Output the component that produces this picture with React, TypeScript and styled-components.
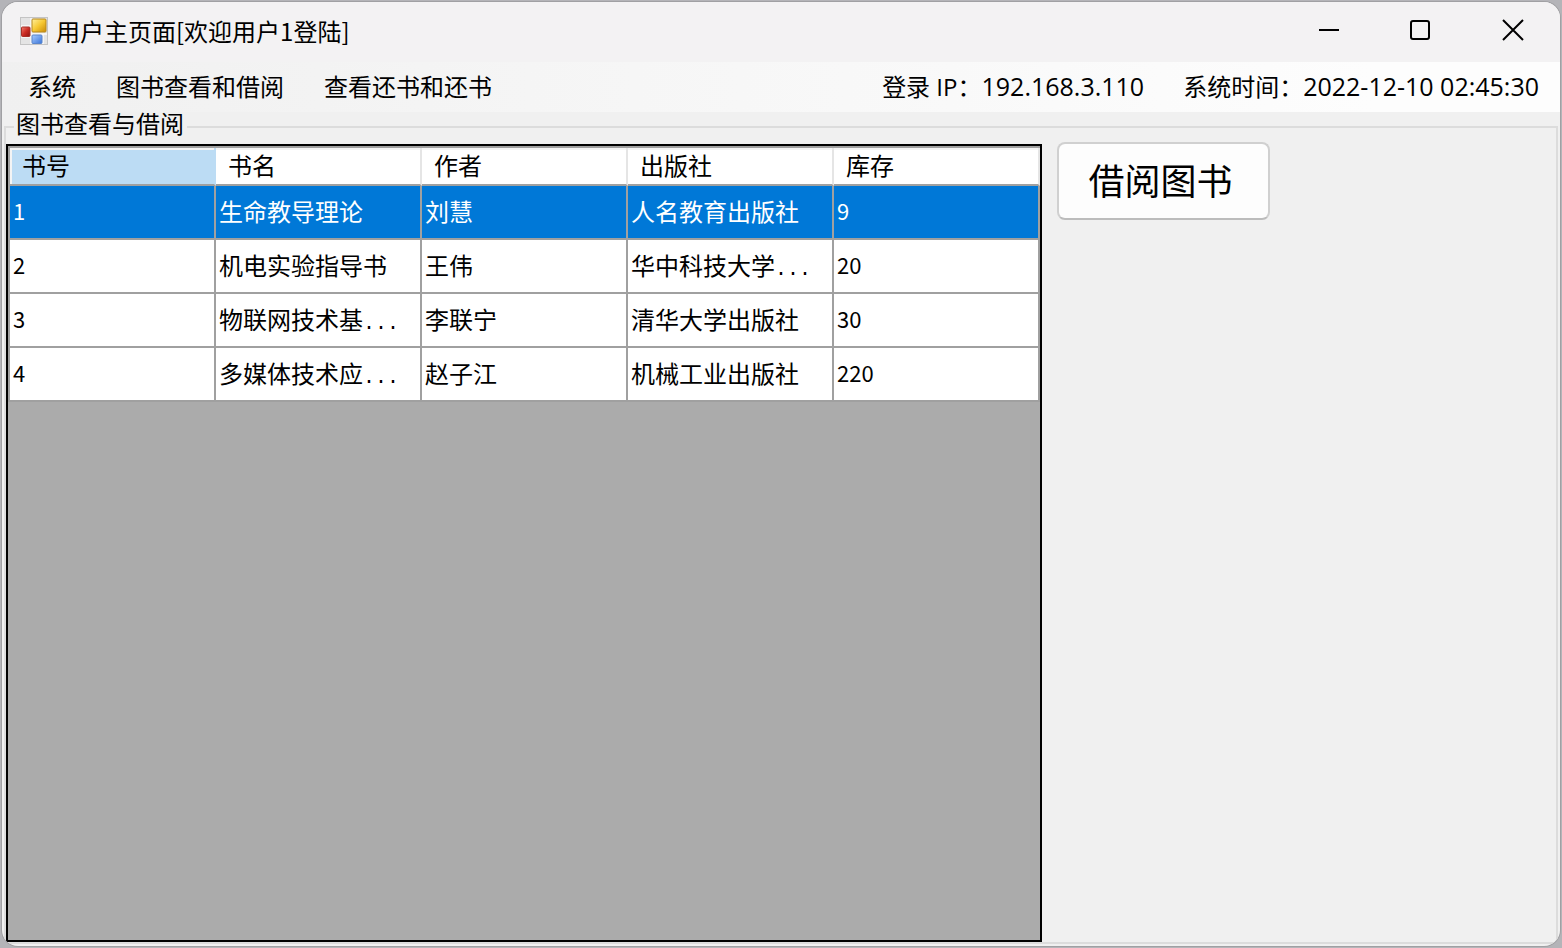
import React, { useState } from "react";
import styled, { createGlobalStyle } from "styled-components";

const GlobalStyle = createGlobalStyle`
  *, *::before, *::after { box-sizing: border-box; }
  body {
    margin: 0;
    background: #b4b4b8;
    color: #000;
    font: 24px/32px "Noto Sans CJK SC", sans-serif;
  }
  button { font: inherit; color: inherit; cursor: default; }
`;

const Desktop = styled.div`
  display: flex;
  min-height: 100vh;
  padding: 2px;
`;

const Window = styled.main`
  flex: 1;
  min-width: 0;
  display: flex;
  flex-direction: column;
  border-radius: 16px;
  background: #f0f0f0;
  overflow: hidden;
  box-shadow: 0 0 0 1px #a0a0a3;
`;

const TitleBar = styled.header`
  display: flex;
  align-items: center;
  height: 60px;
  padding: 0 1px 2px 18px;
  background: #f3f2f3;
`;

const Title = styled.h1`
  flex: 1;
  margin: 0 0 0 8px;
  font-size: 24px;
  line-height: 32px;
  font-weight: 400;
`;

const CaptionButton = styled.button`
  display: flex;
  align-items: center;
  justify-content: center;
  width: 92px;
  height: 56px;
  margin-bottom: 2px;
  padding: 0;
  border: 0;
  background: transparent;
`;

const MenuBar = styled.div`
  display: flex;
  align-items: center;
  justify-content: space-between;
  height: 50px;
  padding: 0 21px 0 6px;
  background: linear-gradient(90deg, #f0f0f0, #fdfdfd 88%);
`;

const Menu = styled.nav`
  display: flex;
`;

const MenuButton = styled.button`
  height: 48px;
  padding: 0 20px 2px;
  border: 0;
  background: transparent;
`;

const StatusList = styled.div`
  display: flex;
  gap: 39px;
  padding-bottom: 2px;
`;

const StatusItem = styled.span`
  font-family: "Open Sans", "Noto Sans CJK SC", sans-serif;
  white-space: nowrap;
`;

const StatusValue = styled.span`
  font-size: 25px;
`;

const Group = styled.fieldset`
  flex: 1;
  display: flex;
  gap: 15px;
  min-width: 0;
  margin: 0 2px 2px;
  padding: 0;
  border: 2px solid #dcdcdc;
`;

const Legend = styled.legend`
  height: 30px;
  margin-left: 8px;
  padding: 0 3px 8px 2px;
  line-height: 22px;
`;

const GridPanel = styled.div`
  flex: 1;
  min-width: 0;
  margin-top: 2px;
  border: 2px solid #000;
  background: #ababab;
  overflow: hidden;
`;

const Table = styled.table`
  border-collapse: separate;
  border-spacing: 0;
  border: 2px solid #a0a0a0;
  border-width: 2px 0 0 2px;
`;

const HeadCell = styled.th<{ $active?: boolean }>`
  width: 206px;
  min-width: 206px;
  height: 38px;
  padding: 0 12px 2px;
  border-right: 2px solid ${(p) => (p.$active ? "#bcdcf4" : "#e5e5e5")};
  border-bottom: 2px solid #a0a0a0;
  background: ${(p) => (p.$active ? "#bcdcf4" : "#fff")};
  box-shadow: inset ${(p) => (p.$active ? "2px" : "0")} 2px #f4f4f4;
  font-weight: 400;
  text-align: left;
  white-space: nowrap;
`;

const Row = styled.tr<{ $selected: boolean }>`
  background: ${(p) => (p.$selected ? "#0078d7" : "#fff")};
  color: ${(p) => (p.$selected ? "#fff" : "#000")};
`;

const Cell = styled.td<{ $numeric?: boolean }>`
  height: 54px;
  padding: 0 3px ${(p) => (p.$numeric ? 4 : 2)}px;
  border-right: 2px solid #a0a0a0;
  border-bottom: 2px solid #a0a0a0;
  font-size: ${(p) => (p.$numeric ? 22 : 24)}px;
  white-space: nowrap;
`;

const Dots = styled.span`
  font-family: "Liberation Mono", monospace;
  font-size: 20px;
  line-height: 0;
`;

const SidePanel = styled.div`
  width: 499px;
`;

const BorrowButton = styled.button`
  width: 213px;
  height: 78px;
  padding: 0 6px 4px 0;
  border: 2px solid #d0d0d0;
  border-bottom-color: #bcbcbc;
  border-radius: 8px;
  background: #fdfdfd;
  font-size: 36px;
  line-height: 48px;
`;

const AppIcon = () => (
  <svg width="28" height="28" viewBox="0 0 28 28" aria-hidden="true">
    <defs>
      <linearGradient id="gold" x1="0" y1="0" x2="1" y2="1">
        <stop offset="0" stopColor="#fff0a0" />
        <stop offset="0.5" stopColor="#f6c832" />
        <stop offset="1" stopColor="#c98a08" />
      </linearGradient>
      <linearGradient id="red" x1="0" y1="0" x2="1" y2="1">
        <stop offset="0" stopColor="#f08070" />
        <stop offset="0.5" stopColor="#cc2c24" />
        <stop offset="1" stopColor="#8c1410" />
      </linearGradient>
      <linearGradient id="blue" x1="0" y1="0" x2="1" y2="1">
        <stop offset="0" stopColor="#a8ccff" />
        <stop offset="1" stopColor="#3a74d8" />
      </linearGradient>
    </defs>
    <rect x="0.5" y="0.5" width="27" height="27" fill="#e4e4e4" stroke="#c4c4c4" />
    <path d="M1 9H11M11 1V27M11 17H27M23 17V27M1 20H11" stroke="#fafafa" strokeWidth="1.5" />
    <rect x="12" y="2" width="14" height="13" rx="1" fill="url(#gold)" stroke="#b98a1c" />
    <rect x="1.5" y="10" width="8.5" height="9.5" rx="1" fill="url(#red)" stroke="#a83028" />
    <rect x="12" y="18" width="10" height="8.5" rx="1" fill="url(#blue)" stroke="#5a86cc" />
  </svg>
);

const captionIcons = [
  { label: "最小化", shape: <path d="M1 11H21" /> },
  { label: "最大化", shape: <rect x="1" y="2" width="18" height="18" rx="2" /> },
  { label: "关闭", shape: <path d="M1 1L21 21M21 1L1 21" /> },
];

const menuItems = ["系统", "图书查看和借阅", "查看还书和还书"];
const columns = ["书号", "书名", "作者", "出版社", "库存"];
const books = [
  ["1", "生命教导理论", "刘慧", "人名教育出版社", "9"],
  ["2", "机电实验指导书", "王伟", "华中科技大学...", "20"],
  ["3", "物联网技术基...", "李联宁", "清华大学出版社", "30"],
  ["4", "多媒体技术应...", "赵子江", "机械工业出版社", "220"],
];

const CellText = ({ text }: { text: string }) =>
  text.endsWith("...") ? (
    <>
      {text.slice(0, -3)}
      <Dots>...</Dots>
    </>
  ) : (
    <>{text}</>
  );

export default function App() {
  const [selected, setSelected] = useState(0);

  return (
    <Desktop>
      <GlobalStyle />
      <Window>
        <TitleBar>
          <AppIcon />
          <Title>用户主页面[欢迎用户1登陆]</Title>
          {captionIcons.map(({ label, shape }) => (
            <CaptionButton key={label} type="button" aria-label={label}>
              <svg width="22" height="22" viewBox="0 0 22 22" fill="none" stroke="#000" strokeWidth="2">
                {shape}
              </svg>
            </CaptionButton>
          ))}
        </TitleBar>
        <MenuBar>
          <Menu>
            {menuItems.map((item) => (
              <MenuButton key={item} type="button">
                {item}
              </MenuButton>
            ))}
          </Menu>
          <StatusList>
            <StatusItem>
              登录 IP：<StatusValue>192.168.3.110</StatusValue>
            </StatusItem>
            <StatusItem>
              系统时间：<StatusValue>2022-12-10 02:45:30</StatusValue>
            </StatusItem>
          </StatusList>
        </MenuBar>
        <Group>
          <Legend>图书查看与借阅</Legend>
          <GridPanel>
            <Table>
              <thead>
                <tr>
                  {columns.map((name, i) => (
                    <HeadCell key={name} scope="col" $active={i === 0}>
                      {name}
                    </HeadCell>
                  ))}
                </tr>
              </thead>
              <tbody>
                {books.map((book, r) => (
                  <Row key={book[0]} $selected={r === selected} onClick={() => setSelected(r)}>
                    {book.map((text, c) => (
                      <Cell key={columns[c]} $numeric={c === 0 || c === 4}>
                        <CellText text={text} />
                      </Cell>
                    ))}
                  </Row>
                ))}
              </tbody>
            </Table>
          </GridPanel>
          <SidePanel>
            <BorrowButton type="button">借阅图书</BorrowButton>
          </SidePanel>
        </Group>
      </Window>
    </Desktop>
  );
}
